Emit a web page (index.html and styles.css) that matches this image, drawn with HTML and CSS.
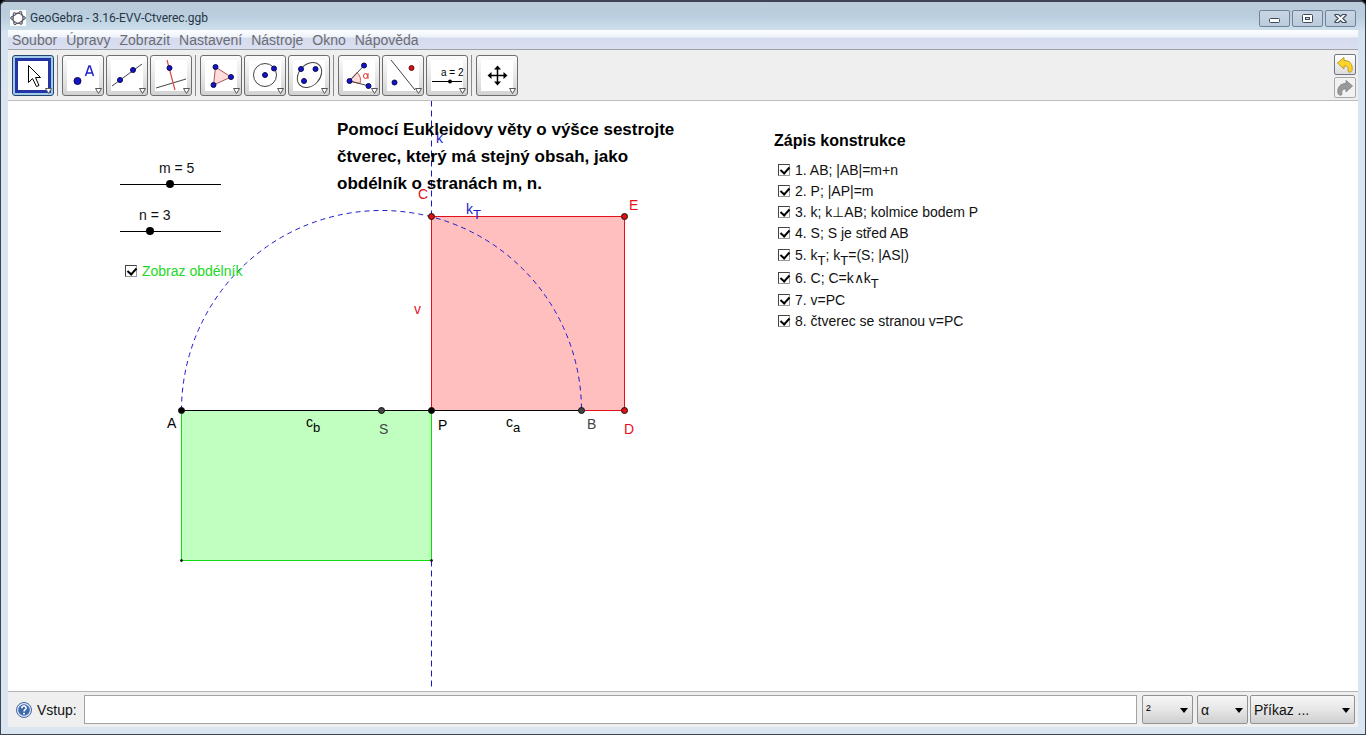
FILE: index.html
```html
<!DOCTYPE html>
<html lang="cs">
<head>
<meta charset="utf-8">
<title>GeoGebra - 3.16-EVV-Ctverec.ggb</title>
<link rel="stylesheet" href="styles.css">
</head>
<body>
<div class="window">
  <header class="titlebar">
    <svg class="app-icon" width="16" height="16" viewBox="0 0 16 16" aria-hidden="true">
      <rect width="16" height="16" fill="#fff"/>
      <path d="M4.500 4 10.500 2.500 14 8 11 13 5 13.500 2 8Z" fill="none" stroke="#555" stroke-width="1.500"/>
      <g fill="#b8bcf0" stroke="#444" stroke-width=".8"><circle cx="4.500" cy="4" r="1.400"/><circle cx="10.500" cy="2.700" r="1.400"/><circle cx="14" cy="8" r="1.400"/><circle cx="11" cy="13" r="1.400"/><circle cx="5" cy="13.300" r="1.400"/><circle cx="2" cy="8" r="1.400"/></g>
    </svg>
    <span class="title">GeoGebra - 3.16-EVV-Ctverec.ggb</span>
    <div class="window-buttons">
      <button class="winbtn" aria-label="Minimalizovat"><svg width="29" height="15" viewBox="0 0 29 15"><rect x="9.500" y="7.500" width="10" height="4" rx="1" fill="#fff" stroke="#3f4a58"/></svg></button>
      <button class="winbtn" aria-label="Maximalizovat"><svg width="29" height="15" viewBox="0 0 29 15"><rect x="9.500" y="3.500" width="10" height="8" rx="1" fill="#fff" stroke="#3f4a58"/><rect x="12.500" y="6.500" width="4" height="2" fill="#c3d3e3" stroke="#3f4a58"/></svg></button>
      <button class="winbtn" aria-label="Zavřít"><svg width="29" height="15" viewBox="0 0 29 15"><path d="M9 3.500h3.500l2 2 2-2H20v1l-3.200 3 3.200 3v1h-3.500l-2-2-2 2H9v-1l3.200-3L9 4.500z" fill="#fff" stroke="#3f4a58" stroke-width="1.200"/></svg></button>
    </div>
  </header>

  <div class="client">
    <nav class="menubar">
      <button>Soubor</button><button>Úpravy</button><button>Zobrazit</button><button>Nastavení</button><button>Nástroje</button><button>Okno</button><button>Nápověda</button>
    </nav>

    <div class="toolbar">
      <div class="tools">
        <button class="tool selected" aria-label="Ukazovátko"><svg viewBox="0 0 42 42"><path d="M16.500 10.500v17l4-4 4 8 2.500-1-3.500-8h5z" fill="#fff" stroke="#000"/><path class="drop" d="M33.500 33.500h6l-3 5z"/></svg></button>
        <span class="separator"></span>
        <button class="tool" aria-label="Nový bod"><svg viewBox="0 0 42 42"><circle class="pt" cx="15.500" cy="26" r="3.500"/><path d="M23.500 21 27 11h1l3.500 10M24.500 18h6" fill="none" stroke="#22c" stroke-width="1.500"/><path class="drop" d="M33.500 33.500h6l-3 5z"/></svg></button>
        <button class="tool" aria-label="Přímka"><svg viewBox="0 0 42 42"><path class="ln" d="M6 31 36 9"/><circle class="pt" cx="14" cy="25" r="2.500"/><circle class="pt" cx="27" cy="15" r="2.500"/><path class="drop" d="M33.500 33.500h6l-3 5z"/></svg></button>
        <button class="tool" aria-label="Kolmice"><svg viewBox="0 0 42 42"><path class="ln" d="M6 33 36 24"/><path class="rd" d="M17 5 25 35"/><circle class="pt" cx="19.500" cy="13" r="2.500"/><path class="drop" d="M33.500 33.500h6l-3 5z"/></svg></button>
        <span class="separator"></span>
        <button class="tool" aria-label="Mnohoúhelník"><svg viewBox="0 0 42 42"><path d="M15.500 12 31 22 13.500 30Z" fill="#fdd" stroke="#a55"/><circle class="pt" cx="15.500" cy="12" r="2.500"/><circle class="pt" cx="31" cy="22" r="2.500"/><circle class="pt" cx="13.500" cy="30" r="2.500"/><path class="drop" d="M33.500 33.500h6l-3 5z"/></svg></button>
        <button class="tool" aria-label="Kružnice"><svg viewBox="0 0 42 42"><circle class="ln" cx="21" cy="20" r="11.500"/><circle class="pt" cx="21" cy="20" r="2.500"/><circle class="pt" cx="30" cy="13.500" r="2.500"/><path class="drop" d="M33.500 33.500h6l-3 5z"/></svg></button>
        <button class="tool" aria-label="Elipsa"><svg viewBox="0 0 42 42"><ellipse class="ln" cx="21.500" cy="20" rx="14" ry="10.500" transform="rotate(-48 21.500 20)"/><circle class="pt" cx="13" cy="14" r="2.500"/><circle class="pt" cx="27.500" cy="14" r="2.500"/><circle class="pt" cx="16" cy="26" r="2.500"/><path class="drop" d="M33.500 33.500h6l-3 5z"/></svg></button>
        <span class="separator"></span>
        <button class="tool" aria-label="Úhel"><svg viewBox="0 0 42 42"><path d="M11 26 19 17.500Q24 22 22 28.500Z" fill="#fdd" stroke="#d55"/><path class="ln" d="M26 10.500 11.500 26 31 31"/><ellipse cx="27.500" cy="21" rx="2" ry="2.500" fill="none" stroke="#d33"/><path d="M30 18v6" stroke="#d33"/><circle class="pt" cx="26" cy="10.500" r="2.500"/><circle class="pt" cx="11.500" cy="26" r="2.500"/><circle class="pt" cx="30.500" cy="31" r="2.500"/><path class="drop" d="M33.500 33.500h6l-3 5z"/></svg></button>
        <button class="tool" aria-label="Osová souměrnost"><svg viewBox="0 0 42 42"><path class="ln" d="M9 5 33 35"/><circle class="pt" cx="12.500" cy="27.500" r="2.500"/><circle cx="29.500" cy="13" r="2.500" fill="#c11" stroke="#711"/><path class="drop" d="M33.500 33.500h6l-3 5z"/></svg></button>
        <button class="tool" aria-label="Posuvník"><svg viewBox="0 0 42 42"><text class="tool-text" x="15" y="21">a = 2</text><path d="M6 26.500h30" stroke="#000"/><circle cx="24" cy="26.500" r="2"/><path class="drop" d="M33.500 33.500h6l-3 5z"/></svg></button>
        <span class="separator"></span>
        <button class="tool" aria-label="Pohyb nákresnou"><svg viewBox="0 0 42 42"><path d="M21.500 13v16M13 20.500h17" stroke="#000" stroke-width="1.500"/><path d="M21.500 10.500l3.500 4h-7zM21.500 30.500l3.500-4h-7zM11.500 20.500l4-3.500v7zM31.500 20.500l-4-3.500v7z"/><path class="drop" d="M33.500 33.500h6l-3 5z"/></svg></button>
      </div>
      <div class="history">
        <button class="hist" aria-label="Zpět"><svg width="18" height="18" viewBox="0 0 18 18"><path d="M1.500 7 8 1.500v3c6 0 9 4 8 10-1 2-3 2-4 1 1-4-1-6-4-5.500V13z" fill="#fbd52c" stroke="#c49a1c"/></svg></button>
        <button class="hist disabled" aria-label="Znovu"><svg width="18" height="18" viewBox="0 0 18 18"><path d="M16.500 7 10 1.500v3c-6 0-9 4-8 10 1 2 3 2 4 1-1-4 1-6 4-5.500V13z" fill="#999" stroke="#8c8c8c"/></svg></button>
      </div>
    </div>

    <main class="graphics">
      <svg class="drawing" aria-label="Konstrukce čtverce">
        <!-- origin at the foot P of the altitude, 50 px per unit -->
        <g transform="translate(423.5 309.5)">
          <rect x="-250" y="0" width="250" height="150" fill="#c0ffc0"/>
          <rect x="0" y="-194" width="193" height="194" fill="#ffbfbf"/>
          <g class="lines">
            <path d="M0-310V278" stroke="#1a1acd" stroke-dasharray="6 4"/>
            <path d="M-250 0V150H0V0" stroke="#0fdc0f"/>
            <path d="M0 0V-194H193V0H150" stroke="#e6101c"/>
            <path d="M-250 0H150" stroke="#000"/>
            <path d="M-250 0A200 200 0 0 1 150 0" stroke="#1a1acd" stroke-dasharray="5 4"/>
          </g>
          <g class="points">
            <circle cx="-250" r="3"/><circle r="3"/>
            <circle cx="-50" r="3" fill="#444"/><circle cx="150" r="3" fill="#444"/>
            <circle cy="-194" r="3" fill="#e60f0f"/><circle cx="193" cy="-194" r="3" fill="#e60f0f"/><circle cx="193" r="3" fill="#e60f0f"/>
            <circle cx="-250" cy="150" r="1"/><circle cy="150" r="1"/>
          </g>
        </g>
        <g class="labels" transform="translate(424 309)">
          <text x="-265" y="18">A</text>
          <text x="-126" y="17">c<tspan class="index" dy="5">b</tspan></text>
          <text x="-53" y="24" fill="#444">S</text>
          <text x="6" y="20">P</text>
          <text x="74" y="17">c<tspan class="index" dy="5">a</tspan></text>
          <text x="155" y="19" fill="#444">B</text>
          <text x="192" y="24" fill="#e6101c">D</text>
          <text x="197" y="-200" fill="#e6101c">E</text>
          <text x="-14" y="-211" fill="#e6101c">C</text>
          <text x="-18" y="-96" fill="#e6101c">v</text>
          <text x="4" y="-267" fill="#1a1acd">k</text>
          <text x="34" y="-196" fill="#1a1acd">k<tspan class="index" dy="5">T</tspan></text>
        </g>
      </svg>

      <h1 class="task">Pomocí Eukleidovy věty o výšce sestrojte<br>čtverec, který má stejný obsah, jako<br>obdélník o stranách m, n.</h1>

      <div class="slider slider-m">
        <label for="m">m = 5</label>
        <input id="m" type="range" min="0" max="10" value="5">
      </div>
      <div class="slider slider-n">
        <label for="n">n = 3</label>
        <input id="n" type="range" min="0" max="10" value="3">
      </div>
      <label class="check show-rect"><input type="checkbox" checked>Zobraz obdélník</label>

      <section class="steps">
        <h2>Zápis konstrukce</h2>
        <label class="check"><input type="checkbox" checked><span>1. AB; |AB|=m+n</span></label>
        <label class="check"><input type="checkbox" checked><span>2. P; |AP|=m</span></label>
        <label class="check"><input type="checkbox" checked><span>3. k; k⊥AB; kolmice bodem P</span></label>
        <label class="check"><input type="checkbox" checked><span>4. S; S je střed AB</span></label>
        <label class="check tall"><input type="checkbox" checked><span>5. k<sub>T</sub>; k<sub>T</sub>=(S; |AS|)</span></label>
        <label class="check tall"><input type="checkbox" checked><span>6. C; C=k∧k<sub>T</sub></span></label>
        <label class="check"><input type="checkbox" checked><span>7. v=PC</span></label>
        <label class="check"><input type="checkbox" checked><span>8. čtverec se stranou v=PC</span></label>
      </section>
    </main>

    <footer class="inputbar">
      <button class="help" aria-label="Nápověda"><svg width="16" height="16" viewBox="0 0 16 16"><circle cx="8" cy="8" r="7.500" fill="#dce8f6" stroke="#4466a0"/><circle cx="8" cy="8" r="5.800" fill="#3e68ac"/><path d="M5.800 6.200C6 3.200 10.500 3.500 10 6.300 9.700 7.700 8 7.700 8 9.500M8 10.800v1.700" fill="none" stroke="#fff" stroke-width="1.600"/></svg></button>
      <label class="prompt" for="cmd">Vstup:</label>
      <input class="command" id="cmd" type="text">
      <div class="pick small first"><select aria-label="Exponent"><option>²</option></select></div>
      <div class="pick small second"><select aria-label="Symbol"><option>α</option></select></div>
      <div class="pick large"><select aria-label="Příkaz"><option>Příkaz ...</option></select></div>
    </footer>
  </div>
</div>
</body>
</html>
```
FILE: styles.css
```css
* { box-sizing: border-box; }

body {
  margin: 0;
  background: #000;
  font-family: "Liberation Sans", Arial, sans-serif;
  font-size: 14px;
  color: #111;
}

button, input, select { font: inherit; color: inherit; margin: 0; }
button { padding: 0; }

.window {
  display: flex;
  flex-direction: column;
  height: 100vh;
  padding: 0 7px 7px;
  border: 1px solid #3c4453;
  border-top: 2px solid #3f4354;
  border-radius: 6px 6px 0 0;
  background: linear-gradient(#b9cad9, #d5e2ef 30px, #d9e5f1 100px);
}

/* title bar */
.titlebar {
  display: flex;
  align-items: center;
  height: 28px;
  margin: 0 -7px;
  padding: 4px 9px 0;
  background: linear-gradient(#bccbd9, #b9cede 50%, #cddfeb);
  border-radius: 5px 5px 0 0;
}
.title {
  margin-left: 4px;
  font-family: Roboto, "Open Sans", sans-serif;
  font-size: 12px;
  color: #273545;
}
.window-buttons { display: flex; gap: 2px; margin-left: auto; }
.winbtn {
  display: flex;
  align-items: center;
  justify-content: center;
  width: 31px;
  height: 17px;
  border: 1px solid #71839b;
  border-radius: 2px;
  background: linear-gradient(#c8d6e4, #bccbdc);
}

.client {
  flex: 1;
  display: flex;
  flex-direction: column;
  min-height: 0;
  background: #efefef;
}

/* menu */
.menubar {
  display: flex;
  align-items: center;
  gap: 9px;
  height: 20px;
  padding-left: 4px;
  border-bottom: 1px solid #a0a2a8;
  background: linear-gradient(#fdfeff, #eef3fa 7px, #d6daee 8px, #dadff1);
}
.menubar button { border: 0; background: none; color: #6b6d73; }

/* tools */
.toolbar {
  display: flex;
  justify-content: space-between;
  align-items: flex-start;
  height: 51px;
  padding: 4px 2px 0 4px;
  border-bottom: 1px solid #bdbdbd;
  background: #efefef;
}
.tools { display: flex; gap: 2px; padding-top: 1px; }
.tool {
  width: 42px;
  height: 41px;
  border: 1px solid #6e6e6e;
  border-radius: 3px;
  background: linear-gradient(#fff, #fff) center / 32px 31px no-repeat, linear-gradient(#fbfbfb, #e9e9e9 50%, #d2d2d2);
}
.tool svg { display: block; width: 42px; height: 42px; margin: -1px; }
.tool.selected {
  border-color: #26456a;
  background: linear-gradient(#fff, #fff) center / 30px 29px no-repeat, linear-gradient(#2334a4, #2334a4) center / 36px 35px no-repeat, #9fcbe9;
}
.tool-text { font-size: 10px; }
.separator { width: 1px; margin: 0 2px 0 1px; background: #8a8a8a; }
.pt { fill: #1414c8; stroke: #0a0a55; }
.ln { fill: none; stroke: #444; }
.rd { stroke: #e04848; stroke-width: 1.2; }
.drop { fill: #fff; stroke: #555; }

.history { display: flex; flex-direction: column; gap: 2px; }
.hist {
  display: flex;
  align-items: center;
  justify-content: center;
  width: 22px;
  height: 21px;
  border: 1px solid #6d7586;
  border-radius: 2px;
  background: linear-gradient(#fff, #dcdcdc);
}
.hist.disabled { border-color: #a9a9a9; background: #f2f2f2; }

/* graphics view */
.graphics { position: relative; flex: 1; min-height: 0; overflow: hidden; background: #fff; }
.drawing { display: block; width: 100%; height: 100%; }
.lines { fill: none; }
.points { stroke: #111; }
.index { font-size: 13px; }

.task, .steps h2 { margin: 0; font-weight: bold; color: #000; }
.task {
  position: absolute;
  left: 329px;
  top: 15px;
  font-size: 17px;
  line-height: 27px;
  white-space: nowrap;
}

.slider { position: absolute; left: 108px; width: 108px; }
.slider-m { top: 59px; }
.slider-n { top: 106px; }
.slider label { display: block; line-height: 16px; padding-left: 43px; }
.slider-n label { padding-left: 23px; }
.slider input {
  display: block;
  appearance: none;
  width: 100%;
  height: 16px;
  background: linear-gradient(#000, #000) center / 101px 1px no-repeat;
}
.slider input::-webkit-slider-thumb {
  appearance: none;
  width: 8px;
  height: 8px;
  border-radius: 4px;
  background: #000;
}

.check { display: flex; align-items: center; gap: 5px; height: 21px; white-space: nowrap; }
.check.tall { height: 23px; }
.check input {
  appearance: none;
  position: relative;
  width: 12px;
  height: 12px;
  border: 1px solid #9a9a9a;
  border-top-color: #444;
  border-left-color: #444;
  background: #fff;
}
.check input:checked::after {
  content: "";
  position: absolute;
  left: 3px;
  top: 0;
  width: 4px;
  height: 7px;
  border: solid #000;
  border-width: 0 2px 2px 0;
  transform: rotate(42deg);
}
.check sub { font-size: 13px; line-height: 0; vertical-align: -5px; }
.show-rect { position: absolute; left: 117px; top: 159px; color: #22d822; }

.steps { position: absolute; left: 766px; top: 29px; }
.steps h2 { margin-bottom: 8px; font-size: 16px; line-height: 21px; }
.steps .check { margin-left: 4px; }

/* command input */
.inputbar {
  display: flex;
  align-items: center;
  height: 36px;
  padding: 0 3px 0 8px;
  border-top: 1px solid #b5b5b5;
}
.help { display: flex; border: 0; background: none; }
.prompt { margin: 0 7px 0 5px; }
.command {
  flex: 1;
  min-width: 0;
  height: 29px;
  border: 1px solid #a3a3a3;
  background: #fff;
}
.pick { position: relative; margin-left: 2px; }
.pick.first { margin-left: 5px; }
.pick.second { margin-left: 4px; }
.pick.small { width: 51px; }
.pick.large { width: 105px; }
.pick select {
  display: block;
  appearance: none;
  width: 100%;
  height: 29px;
  padding: 0 3px;
  border: 1px solid #929292;
  border-radius: 2px;
  background: linear-gradient(#f7f7f7, #e6e6e6 50%, #cfcfcf);
}
.pick::after {
  content: "";
  position: absolute;
  right: 5px;
  top: 13px;
  border: solid transparent;
  border-width: 5px 4px 0;
  border-top-color: #000;
  pointer-events: none;
}
```
